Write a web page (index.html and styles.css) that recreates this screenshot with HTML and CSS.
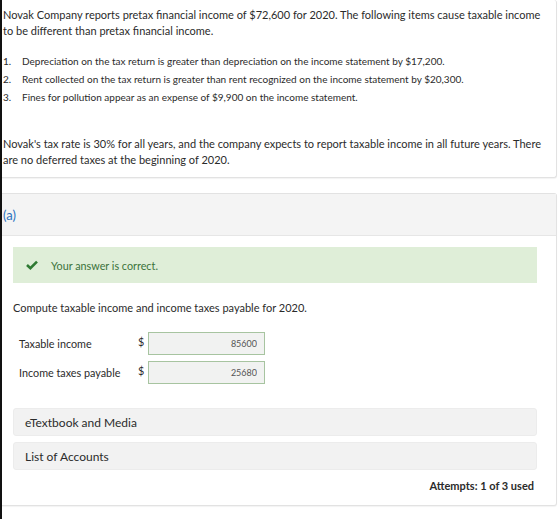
FILE: index.html
```html
<!DOCTYPE html>
<html lang="en">
<head>
    <meta charset="UTF-8">
    <meta name="viewport" content="width=device-width, initial-scale=1.0">
    <title>Novak Company - Income Taxes</title>
    <link rel="stylesheet" href="styles.css">
</head>
<body>
    <div class="page">
        <section class="card question">
            <p class="lead">Novak Company reports pretax financial income of $72,600 for 2020. The following items cause taxable income to be different than pretax financial income.</p>
            <ol class="items">
                <li><span class="num">1.</span>Depreciation on the tax return is greater than depreciation on the income statement by $17,200.</li>
                <li><span class="num">2.</span>Rent collected on the tax return is greater than rent recognized on the income statement by $20,300.</li>
                <li><span class="num">3.</span>Fines for pollution appear as an expense of $9,900 on the income statement.</li>
            </ol>
            <p class="lead">Novak's tax rate is 30% for all years, and the company expects to report taxable income in all future years. There are no deferred taxes at the beginning of 2020.</p>
        </section>

        <section class="card part">
            <div class="part-head">(a)</div>
            <div class="part-body">
                <div class="alert">
                    <svg class="check" width="12" height="10" viewBox="0 0 12 10">
                        <path d="M1 5 L4.4 8.2 L11 1.6" fill="none" stroke="#2f7a33" stroke-width="2.6"/>
                    </svg>
                    <span>Your answer is correct.</span>
                </div>

                <p class="prompt">Compute taxable income and income taxes payable for 2020.</p>

                <div class="answers">
                    <div class="row">
                        <span class="label">Taxable income</span>
                        <span class="cur">$</span>
                        <input class="value" type="text" value="85600" readonly>
                    </div>
                    <div class="row">
                        <span class="label">Income taxes payable</span>
                        <span class="cur">$</span>
                        <input class="value" type="text" value="25680" readonly>
                    </div>
                </div>

                <div class="resource">eTextbook and Media</div>
                <div class="resource">List of Accounts</div>

                <div class="attempts">Attempts: 1 of 3 used</div>
            </div>
        </section>
    </div>
</body>
</html>
```

FILE: styles.css
```css
body {
    margin: 0;
    background: #fff;
    font-family: Lato, "Open Sans", sans-serif;
    color: #2b2b2b;
}
.page {
    border-left: 2px solid #111;
    min-height: 519px;
    box-sizing: border-box;
    padding-right: 3px;
}
.card {
    background: #fff;
    border: 1px solid #e2e2e2;
    border-left: none;
    border-radius: 0 3px 3px 0;
    box-shadow: 0 1px 1px rgba(0, 0, 0, 0.05);
}
.question {
    border-top: none;
    padding: 7px 14px 9px 1px;
}
.lead {
    margin: 0;
    font-size: 11px;
    line-height: 16px;
}
.items {
    list-style: none;
    margin: 13px 0 30px;
    padding: 0;
    font-size: 10px;
    line-height: 18px;
}
.items .num {
    display: inline-block;
    width: 19px;
}
.part {
    margin-top: 15px;
}
.part-head {
    background: #f4f4f4;
    border-bottom: 1px solid #e6e6e6;
    height: 42px;
    padding: 13px 0 0 1px;
    box-sizing: border-box;
    font-size: 13px;
    line-height: 16px;
    color: #2a72bf;
}
.part-body {
    padding: 11px 19px 12px 11px;
}
.alert {
    display: flex;
    align-items: center;
    height: 36px;
    background: #dfeed8;
    color: #3b733b;
    font-size: 10.8px;
    padding-left: 13px;
}
.check {
    margin-right: 13px;
}
.prompt {
    margin: 17px 0 0;
    font-size: 11px;
    line-height: 15px;
}
.answers {
    margin-top: 17px;
    display: flex;
    flex-direction: column;
    gap: 6px;
}
.row {
    display: flex;
    align-items: center;
    padding-left: 6px;
    font-size: 10.8px;
}
.label {
    width: 119px;
}
.cur {
    width: 10px;
    margin-top: -4px;
}
.value {
    width: 117px;
    height: 23px;
    box-sizing: border-box;
    border: 1px solid #a7c4a0;
    background: #f1f2f1;
    text-align: right;
    font-family: inherit;
    font-size: 9px;
    color: #555;
    padding: 0 7px;
}
.resource {
    margin-top: 6px;
    height: 28px;
    line-height: 28px;
    background: #f2f2f2;
    border: 1px solid #ececec;
    border-radius: 3px;
    box-sizing: border-box;
    padding-left: 11px;
    font-size: 12px;
}
.answers + .resource {
    margin-top: 24px;
}
.attempts {
    margin-top: 9px;
    text-align: right;
    padding-right: 3px;
    font-size: 11px;
    font-weight: bold;
    line-height: 14px;
}
```
